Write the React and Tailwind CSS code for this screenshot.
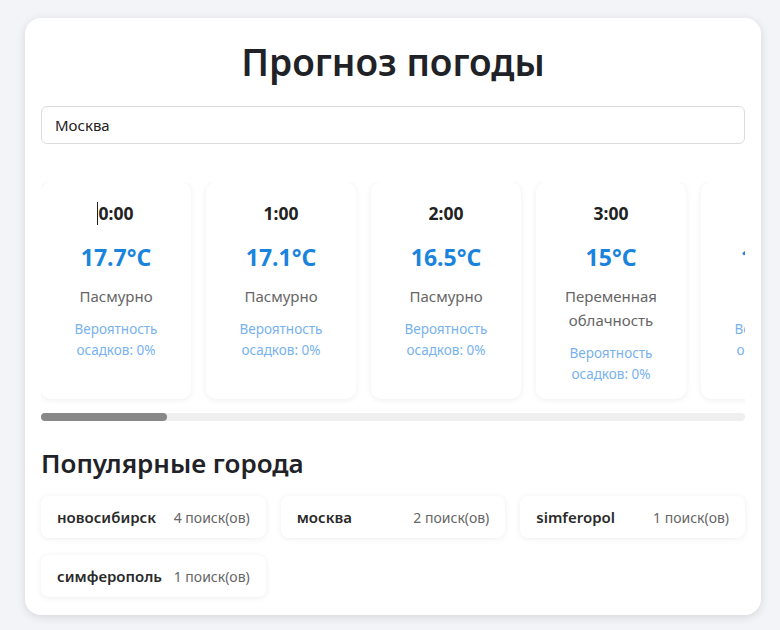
const hours = [
  { t: "0:00", temp: "17.7°C", desc: "Пасмурно", p: 0 },
  { t: "1:00", temp: "17.1°C", desc: "Пасмурно", p: 0 },
  { t: "2:00", temp: "16.5°C", desc: "Пасмурно", p: 0 },
  { t: "3:00", temp: "15°C", desc: "Переменная облачность", p: 0 },
  { t: "4:00", temp: "14.6°C", desc: "Ясно", p: 0 },
  { t: "5:00", temp: "14.2°C", desc: "Ясно", p: 0 },
  { t: "6:00", temp: "14.8°C", desc: "Ясно", p: 0 },
  { t: "7:00", temp: "16.1°C", desc: "Ясно", p: 0 },
  { t: "8:00", temp: "17.9°C", desc: "Ясно", p: 0 },
  { t: "9:00", temp: "19.4°C", desc: "Ясно", p: 0 },
  { t: "10:00", temp: "20.8°C", desc: "Переменная облачность", p: 0 },
  { t: "11:00", temp: "21.9°C", desc: "Переменная облачность", p: 0 },
  { t: "12:00", temp: "22.7°C", desc: "Переменная облачность", p: 5 },
  { t: "13:00", temp: "23.1°C", desc: "Пасмурно", p: 10 },
  { t: "14:00", temp: "23.4°C", desc: "Пасмурно", p: 10 },
  { t: "15:00", temp: "23°C", desc: "Пасмурно", p: 5 },
  { t: "16:00", temp: "22.5°C", desc: "Пасмурно", p: 0 },
  { t: "17:00", temp: "21.8°C", desc: "Пасмурно", p: 0 },
  { t: "18:00", temp: "20.9°C", desc: "Пасмурно", p: 0 },
  { t: "19:00", temp: "19.7°C", desc: "Пасмурно", p: 0 },
  { t: "20:00", temp: "18.8°C", desc: "Пасмурно", p: 0 },
  { t: "21:00", temp: "18.2°C", desc: "Пасмурно", p: 0 },
  { t: "22:00", temp: "17.6°C", desc: "Пасмурно", p: 0 },
  { t: "23:00", temp: "17.2°C", desc: "Пасмурно", p: 0 },
];

const cities = [
  { name: "новосибирск", n: 4 },
  { name: "москва", n: 2 },
  { name: "simferopol", n: 1 },
  { name: "симферополь", n: 1 },
];

function HourCard({ h, caret }) {
  return (
    <div className="w-[150px] shrink-0 rounded-[10px] bg-white px-3 pt-[19px] pb-[14px] text-center shadow-[0_1px_6px_rgba(0,0,0,0.07)]">
      <div className="text-[17.5px] font-bold leading-6 text-[#222]">
        <span className="relative inline-block">
          {caret && <span className="absolute -left-[2px] top-[1px] h-[23px] w-px bg-[#222]" />}
          {h.t}
        </span>
      </div>
      <div className="mt-[18px] text-[23px] font-bold leading-7 text-[#1a84dc]">{h.temp}</div>
      <div className="mt-[13px] text-[15px] leading-6 text-[#666]">{h.desc}</div>
      <div className="mt-[11px] text-[13.5px] leading-[21px] text-[#78b2ee]">
        Вероятность
        <br />
        осадков: {h.p}%
      </div>
    </div>
  );
}

export default function App() {
  return (
    <div className="min-h-[630px] bg-[#f3f4f7] px-[25px] pt-[18px] pb-4 font-['Noto_Sans',sans-serif]">
      <div className="w-[736px] rounded-[16px] bg-white px-4 pt-[18px] pb-[18px] shadow-[0_2px_10px_rgba(0,0,0,0.12)]">
        <h1 className="text-center text-[37px] font-semibold leading-[52px] text-[#1f2328]">Прогноз погоды</h1>
        <input
          className="mt-[18px] block h-[38px] w-full rounded-[6px] border border-[#dcdcdc] px-[13px] text-[15px] text-[#222] outline-none"
          defaultValue="Москва"
        />
        <div className="mt-[38px] flex gap-[15px] overflow-hidden pb-[14px]">
          {hours.map((h, i) => (
            <HourCard key={h.t} h={h} caret={i === 0} />
          ))}
        </div>
        <div className="h-2 rounded bg-[#efefef]">
          <div className="h-2 w-[126px] rounded bg-[#888]" />
        </div>
        <h2 className="mt-[26px] text-[26px] font-semibold leading-8 text-[#1f2328]">Популярные города</h2>
        <div className="mt-[17px] grid grid-cols-3 gap-x-[15px] gap-y-[17px]">
          {cities.map((c) => (
            <div
              key={c.name}
              className="flex h-[42px] items-center justify-between rounded-[8px] bg-white px-4 shadow-[0_1px_6px_rgba(0,0,0,0.07)]"
            >
              <span className="text-[15px] font-semibold text-[#2a2a2a]">{c.name}</span>
              <span className="text-[14px] text-[#666]">{c.n} поиск(ов)</span>
            </div>
          ))}
        </div>
      </div>
    </div>
  );
}
